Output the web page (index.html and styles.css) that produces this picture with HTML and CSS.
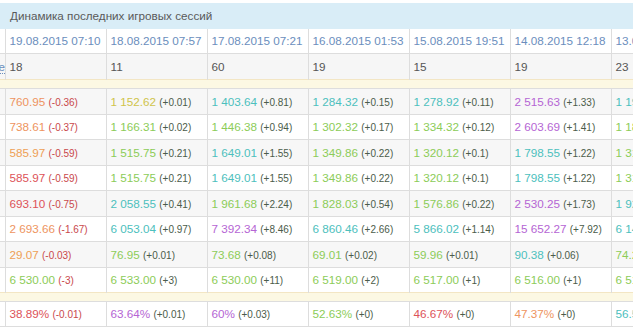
FILE: index.html
```html
<!DOCTYPE html>
<html lang="ru">
<head>
<meta charset="utf-8">
<title>Динамика последних игровых сессий</title>
<link rel="stylesheet" href="styles.css">
</head>
<body>
<div class="panel">
  <div class="panel-heading">Динамика последних игровых сессий</div>
  <div class="panel-body">
    <table class="grid">
      <colgroup>
        <col class="c-label"><col class="c-day"><col class="c-day"><col class="c-day"><col class="c-day"><col class="c-day"><col class="c-day"><col class="c-cut">
      </colgroup>
      <tr class="dates">
        <td class="lbl"></td>
        <td>19.08.2015 07:10</td><td>18.08.2015 07:57</td><td>17.08.2015 07:21</td><td>16.08.2015 01:53</td><td>15.08.2015 19:51</td><td>14.08.2015 12:18</td><td>13.08.2015 22:40</td>
      </tr>
      <tr class="counts">
        <td class="lbl"><div class="lbl-in"><span class="lbl-link">Игроков на столе</span></div></td>
        <td>18</td><td>11</td><td>60</td><td>19</td><td>15</td><td>19</td><td>23</td>
      </tr>
      <tr class="sep"><td colspan="8"></td></tr>
      <tr class="odd">
        <td class="lbl"></td>
        <td><span class="v orange">760.95</span> <span class="d neg">(-0.36)</span></td>
        <td><span class="v yellow">1 152.62</span> <span class="d pos">(+0.01)</span></td>
        <td><span class="v teal">1 403.64</span> <span class="d pos">(+0.81)</span></td>
        <td><span class="v teal">1 284.32</span> <span class="d pos">(+0.15)</span></td>
        <td><span class="v teal">1 278.92</span> <span class="d pos">(+0.11)</span></td>
        <td><span class="v purple">2 515.63</span> <span class="d pos">(+1.33)</span></td>
        <td><span class="v teal">1 196.40</span> <span class="d pos">(+0.12)</span></td>
      </tr>
      <tr class="even">
        <td class="lbl"></td>
        <td><span class="v orange">738.61</span> <span class="d neg">(-0.37)</span></td>
        <td><span class="v green">1 166.31</span> <span class="d pos">(+0.02)</span></td>
        <td><span class="v green">1 446.38</span> <span class="d pos">(+0.94)</span></td>
        <td><span class="v green">1 302.32</span> <span class="d pos">(+0.17)</span></td>
        <td><span class="v green">1 334.32</span> <span class="d pos">(+0.12)</span></td>
        <td><span class="v purple">2 603.69</span> <span class="d pos">(+1.41)</span></td>
        <td><span class="v green">1 180.20</span> <span class="d pos">(+0.10)</span></td>
      </tr>
      <tr class="odd">
        <td class="lbl"></td>
        <td><span class="v orange2">585.97</span> <span class="d neg">(-0.59)</span></td>
        <td><span class="v green">1 515.75</span> <span class="d pos">(+0.21)</span></td>
        <td><span class="v teal">1 649.01</span> <span class="d pos">(+1.55)</span></td>
        <td><span class="v green">1 349.86</span> <span class="d pos">(+0.22)</span></td>
        <td><span class="v green">1 320.12</span> <span class="d pos">(+0.1)</span></td>
        <td><span class="v teal">1 798.55</span> <span class="d pos">(+1.22)</span></td>
        <td><span class="v green">1 310.00</span> <span class="d pos">(+0.20)</span></td>
      </tr>
      <tr class="even">
        <td class="lbl"></td>
        <td><span class="v red">585.97</span> <span class="d neg">(-0.59)</span></td>
        <td><span class="v green">1 515.75</span> <span class="d pos">(+0.21)</span></td>
        <td><span class="v teal">1 649.01</span> <span class="d pos">(+1.55)</span></td>
        <td><span class="v green">1 349.86</span> <span class="d pos">(+0.22)</span></td>
        <td><span class="v green">1 320.12</span> <span class="d pos">(+0.1)</span></td>
        <td><span class="v teal">1 798.55</span> <span class="d pos">(+1.22)</span></td>
        <td><span class="v green">1 310.00</span> <span class="d pos">(+0.20)</span></td>
      </tr>
      <tr class="odd">
        <td class="lbl"></td>
        <td><span class="v red">693.10</span> <span class="d neg">(-0.75)</span></td>
        <td><span class="v teal">2 058.55</span> <span class="d pos">(+0.41)</span></td>
        <td><span class="v green">1 961.68</span> <span class="d pos">(+2.24)</span></td>
        <td><span class="v green">1 828.03</span> <span class="d pos">(+0.54)</span></td>
        <td><span class="v green">1 576.86</span> <span class="d pos">(+0.22)</span></td>
        <td><span class="v purple">2 530.25</span> <span class="d pos">(+1.73)</span></td>
        <td><span class="v teal">1 920.50</span> <span class="d pos">(+0.40)</span></td>
      </tr>
      <tr class="even">
        <td class="lbl"></td>
        <td><span class="v orange">2 693.66</span> <span class="d neg">(-1.67)</span></td>
        <td><span class="v teal">6 053.04</span> <span class="d pos">(+0.97)</span></td>
        <td><span class="v purple">7 392.34</span> <span class="d pos">(+8.46)</span></td>
        <td><span class="v teal">6 860.46</span> <span class="d pos">(+2.66)</span></td>
        <td><span class="v teal">5 866.02</span> <span class="d pos">(+1.14)</span></td>
        <td><span class="v purple">15 652.27</span> <span class="d pos">(+7.92)</span></td>
        <td><span class="v teal">6 140.10</span> <span class="d pos">(+1.30)</span></td>
      </tr>
      <tr class="odd">
        <td class="lbl"></td>
        <td><span class="v orange2">29.07</span> <span class="d neg">(-0.03)</span></td>
        <td><span class="v green">76.95</span> <span class="d pos">(+0.01)</span></td>
        <td><span class="v green">73.68</span> <span class="d pos">(+0.08)</span></td>
        <td><span class="v green">69.01</span> <span class="d pos">(+0.02)</span></td>
        <td><span class="v green">59.96</span> <span class="d pos">(+0.01)</span></td>
        <td><span class="v teal">90.38</span> <span class="d pos">(+0.06)</span></td>
        <td><span class="v green">74.20</span> <span class="d pos">(+0.03)</span></td>
      </tr>
      <tr class="even">
        <td class="lbl"></td>
        <td><span class="v green">6 530.00</span> <span class="d neg">(-3)</span></td>
        <td><span class="v green">6 533.00</span> <span class="d pos">(+3)</span></td>
        <td><span class="v green">6 530.00</span> <span class="d pos">(+11)</span></td>
        <td><span class="v green">6 519.00</span> <span class="d pos">(+2)</span></td>
        <td><span class="v green">6 517.00</span> <span class="d pos">(+1)</span></td>
        <td><span class="v green">6 516.00</span> <span class="d pos">(+1)</span></td>
        <td><span class="v green">6 515.00</span> <span class="d pos">(+1)</span></td>
      </tr>
      <tr class="sep"><td colspan="8"></td></tr>
      <tr class="last">
        <td class="lbl"></td>
        <td><span class="v red">38.89%</span> <span class="d neg">(-0.01)</span></td>
        <td><span class="v purple">63.64%</span> <span class="d pos">(+0.01)</span></td>
        <td><span class="v purple">60%</span> <span class="d pos">(+0.03)</span></td>
        <td><span class="v green">52.63%</span> <span class="d pos">(+0)</span></td>
        <td><span class="v red">46.67%</span> <span class="d pos">(+0)</span></td>
        <td><span class="v orange">47.37%</span> <span class="d pos">(+0)</span></td>
        <td><span class="v teal">56.52%</span> <span class="d pos">(+0)</span></td>
      </tr>
    </table>
  </div>
</div>
</body>
</html>
```

FILE: styles.css
```css
html, body {
  margin: 0;
  padding: 0;
  background: #ffffff;
}

body {
  font-family: "Liberation Sans", Arial, sans-serif;
  font-size: 11.7px;
  color: #555555;
}

.panel {
  width: 633px;
  margin-top: 3px;
  overflow: hidden;
  background: #ffffff;
}

.panel-heading {
  height: 26px;
  line-height: 26px;
  padding-left: 10px;
  background: #d9edf7;
  color: #5a5a5a;
  font-size: 11.7px;
  white-space: nowrap;
}

.panel-body {
  overflow: hidden;
}

.grid {
  border-collapse: collapse;
  table-layout: fixed;
  width: 633px;
}

.c-label { width: 5px; }
.c-day { width: 101px; }
.c-cut { width: 22px; }

.grid td {
  border-top: 1px solid #dddddd;
  border-left: 1px solid #dddddd;
  padding: 4px 4px;
  line-height: 16px;
  white-space: nowrap;
  overflow: hidden;
  text-overflow: clip;
  vertical-align: middle;
}

.grid td:last-child {
  padding-right: 0;
}

.grid td.lbl {
  border-left: none;
  padding: 0;
}

.grid tr:first-child td {
  border-top: none;
}

.dates td {
  color: #6b8ebd;
  background: #ffffff;
}

.counts td {
  color: #555555;
  background: #f6f6f6;
  line-height: 17px;
}

.lbl-in {
  width: 5px;
  overflow: hidden;
  direction: rtl;
  white-space: nowrap;
}

.lbl-link {
  color: #6b8ebd;
  border-bottom: 1px dotted #6b8ebd;
}

.grid tr.odd td {
  background: #f7f7f7;
  line-height: 17px;
}

.grid tr.even td {
  line-height: 16px;
}

.grid tr.last td {
  line-height: 16px;
  border-bottom: 1px solid #dddddd;
}

.grid tr.sep td {
  background: #fcf8e3;
  border-top: 1px solid #f3e6c4;
  border-left: none;
  padding: 0;
  height: 8px;
  line-height: 8px;
}

.v {
  font-size: 11.7px;
  line-height: 1;
}

.d {
  font-size: 10px;
  line-height: 1;
}

.neg { color: #c9484b; }
.pos { color: #4b5c4a; }

.orange { color: #ee9460; }
.orange2 { color: #eea055; }
.red { color: #dd5258; }
.yellow { color: #d0c44a; }
.green { color: #8ccc58; }
.teal { color: #4cc0bd; }
.purple { color: #b565d4; }
```
